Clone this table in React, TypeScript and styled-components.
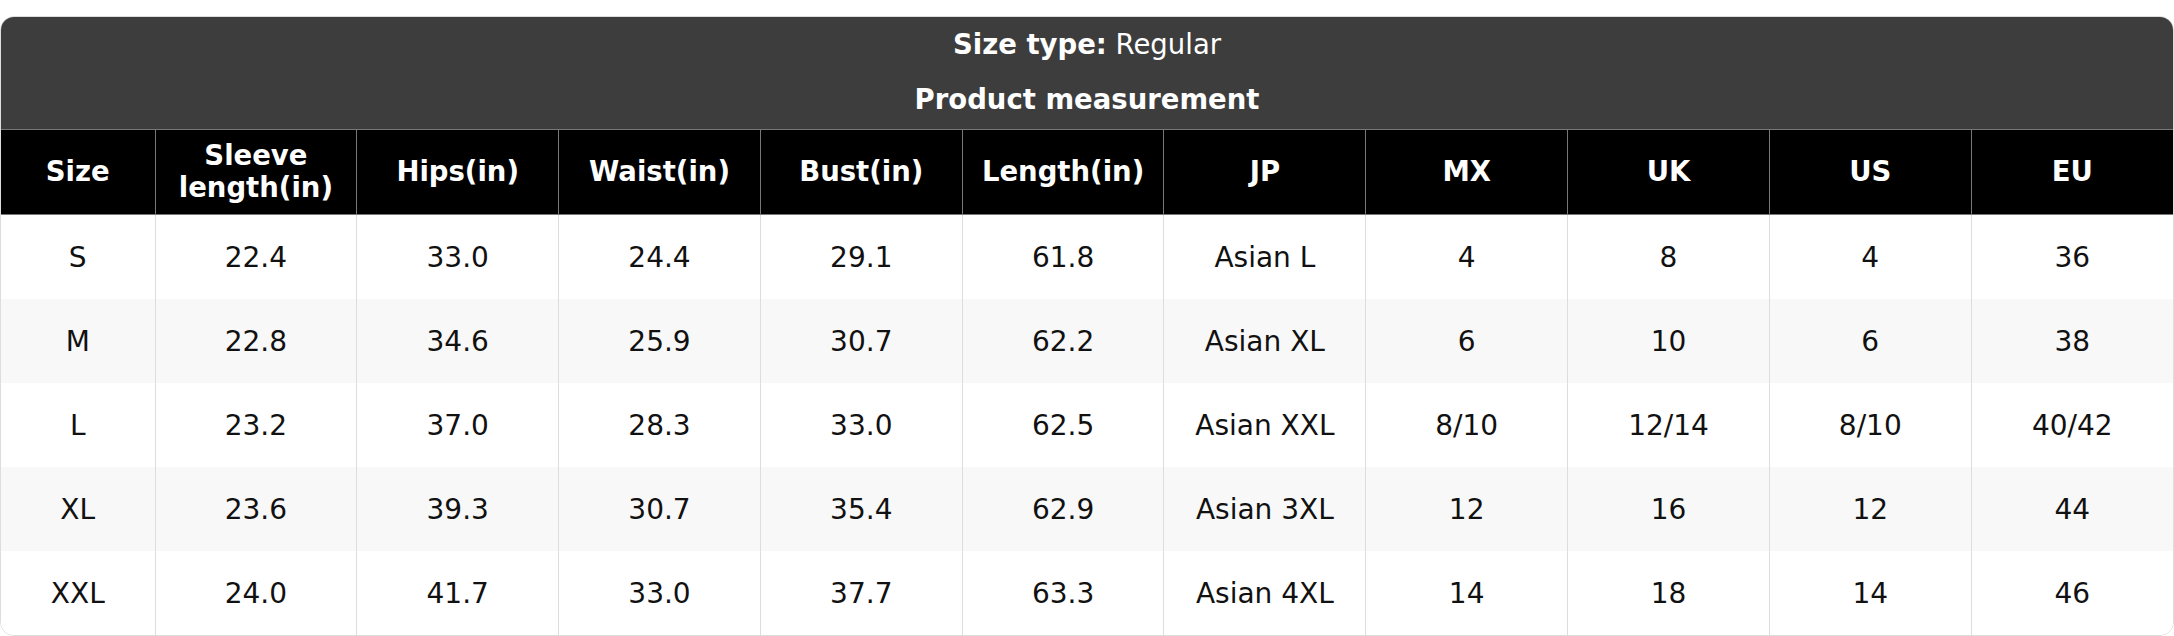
import React from "react";
import styled, { createGlobalStyle } from "styled-components";

const GlobalStyle = createGlobalStyle`
  body {
    margin: 0;
    background: #ffffff;
    font-family: "DejaVu Sans", "Liberation Sans", sans-serif;
  }
`;

const Page = styled.div`
  padding-top: 16px;
`;

const Card = styled.div`
  border: 1.5px solid #dddddd;
  border-radius: 14px;
  overflow: hidden;
  background: #ffffff;
`;

const TitleBlock = styled.div`
  background: #3d3d3d;
  color: #ffffff;
  text-align: center;
  display: flex;
  flex-direction: column;
  padding-bottom: 2px;
`;

const TitleLine = styled.div`
  height: 55px;
  line-height: 54px;
  font-size: 27.5px;
  font-weight: ${(p: { $bold?: boolean }) => (p.$bold ? 700 : 400)};
`;

const Table = styled.table`
  width: 100%;
  border-collapse: collapse;
  table-layout: fixed;
`;

const HeadCell = styled.th`
  background: #000000;
  color: #ffffff;
  font-size: 27.5px;
  font-weight: 700;
  line-height: 32px;
  height: 82px;
  padding: 0 0 2px;
  border: 1.5px solid #777777;
  text-align: center;

  &:first-child {
    border-left: none;
  }
  &:last-child {
    border-right: none;
  }
`;

const Row = styled.tr<{ $striped: boolean }>`
  background: ${(p) => (p.$striped ? "#f8f8f8" : "#ffffff")};
`;

const Cell = styled.td`
  height: 84px;
  padding: 0;
  font-size: 28px;
  color: #111111;
  text-align: center;
  border-left: 1.5px solid #dddddd;
  border-right: 1.5px solid #dddddd;

  &:first-child {
    border-left: none;
  }
  &:last-child {
    border-right: none;
  }
`;

const headers = [
  "Size",
  "Sleeve length(in)",
  "Hips(in)",
  "Waist(in)",
  "Bust(in)",
  "Length(in)",
  "JP",
  "MX",
  "UK",
  "US",
  "EU",
];

const rows = [
  ["S", "22.4", "33.0", "24.4", "29.1", "61.8", "Asian L", "4", "8", "4", "36"],
  ["M", "22.8", "34.6", "25.9", "30.7", "62.2", "Asian XL", "6", "10", "6", "38"],
  ["L", "23.2", "37.0", "28.3", "33.0", "62.5", "Asian XXL", "8/10", "12/14", "8/10", "40/42"],
  ["XL", "23.6", "39.3", "30.7", "35.4", "62.9", "Asian 3XL", "12", "16", "12", "44"],
  ["XXL", "24.0", "41.7", "33.0", "37.7", "63.3", "Asian 4XL", "14", "18", "14", "46"],
];

const App = () => {
  return (
    <Page>
      <GlobalStyle />
      <Card>
        <TitleBlock>
          <TitleLine>
            <b>Size type:</b> Regular
          </TitleLine>
          <TitleLine $bold>Product measurement</TitleLine>
        </TitleBlock>
        <Table>
          <colgroup>
            <col style={{ width: 154 }} />
            {headers.slice(1).map((h) => (
              <col key={h} />
            ))}
          </colgroup>
          <thead>
            <tr>
              {headers.map((h) => (
                <HeadCell key={h}>{h}</HeadCell>
              ))}
            </tr>
          </thead>
          <tbody>
            {rows.map((r, i) => (
              <Row key={r[0]} $striped={i % 2 === 1}>
                {r.map((v, j) => (
                  <Cell key={j}>{v}</Cell>
                ))}
              </Row>
            ))}
          </tbody>
        </Table>
      </Card>
    </Page>
  );
};

export default App;
